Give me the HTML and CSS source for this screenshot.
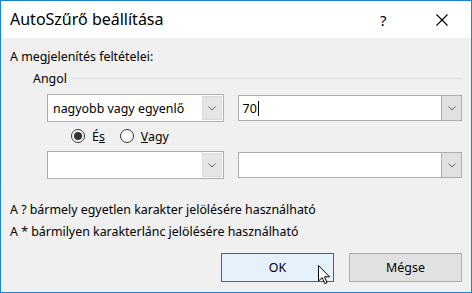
FILE: index.html
```html
<!DOCTYPE html>
<html lang="hu">

<head>
  <meta charset="UTF-8">
  <title>AutoSzűrő beállítása</title>
  <link rel="stylesheet" href="styles.css">
</head>

<body>
  <div class="dialog">
    <div class="dialog__title">
      <span class="dialog__caption">AutoSzűrő beállítása</span>
      <span class="dialog__help">?</span>
      <span class="dialog__close">
        <svg width="12" height="12" viewBox="0 0 12 12">
          <path d="M0.5 0.5 L11.5 11.5 M11.5 0.5 L0.5 11.5" stroke="#000" stroke-width="1.1" fill="none" />
        </svg>
      </span>
    </div>

    <div class="dialog__body">
      <p class="heading">A megjelenítés feltételei:</p>

      <div class="group">
        <span class="group__label">Angol</span>
        <span class="group__line"></span>
      </div>

      <div class="combo-row">
        <div class="combo combo--list">
          <span class="combo__text">nagyobb vagy egyenlő</span>
          <span class="combo__btn">
            <svg width="8" height="5" viewBox="0 0 8 5"><path d="M0.5 0.5 L4 4 L7.5 0.5" stroke="#606060" fill="none" /></svg>
          </span>
        </div>
        <div class="combo combo--edit">
          <span class="combo__text">70<span class="caret"></span></span>
          <span class="combo__btn">
            <svg width="8" height="5" viewBox="0 0 8 5"><path d="M0.5 0.5 L4 4 L7.5 0.5" stroke="#606060" fill="none" /></svg>
          </span>
        </div>
      </div>

      <div class="radios">
        <label class="radio">
          <span class="radio__dot radio__dot--on"></span>
          <span>É<u>s</u></span>
        </label>
        <label class="radio">
          <span class="radio__dot"></span>
          <span><u>V</u>agy</span>
        </label>
      </div>

      <div class="combo-row">
        <div class="combo combo--list">
          <span class="combo__text"></span>
          <span class="combo__btn">
            <svg width="8" height="5" viewBox="0 0 8 5"><path d="M0.5 0.5 L4 4 L7.5 0.5" stroke="#606060" fill="none" /></svg>
          </span>
        </div>
        <div class="combo combo--edit">
          <span class="combo__text"></span>
          <span class="combo__btn">
            <svg width="8" height="5" viewBox="0 0 8 5"><path d="M0.5 0.5 L4 4 L7.5 0.5" stroke="#606060" fill="none" /></svg>
          </span>
        </div>
      </div>

      <div class="hints">
        <p>A ? bármely egyetlen karakter jelölésére használható</p>
        <p>A * bármilyen karakterlánc jelölésére használható</p>
      </div>

      <div class="buttons">
        <button class="btn btn--default">OK</button>
        <button class="btn">Mégse</button>
      </div>
    </div>

    <svg class="pointer" width="13" height="20" viewBox="0 0 13 20">
      <path d="M0.5 0.5 L0.5 16 L4.2 12.6 L6.8 18.6 L9 17.6 L6.5 11.8 L11.5 11.8 Z" fill="#fff" stroke="#000" stroke-width="1" stroke-linejoin="miter" />
    </svg>
  </div>
</body>

</html>
```

FILE: styles.css
```css
html,
body {
  margin: 0;
  padding: 0;
}

body {
  font-family: "Noto Sans", "Liberation Sans", sans-serif;
  font-size: 12.4px;
  color: #000;
}

.dialog {
  position: relative;
  width: 472px;
  height: 293px;
  box-sizing: border-box;
  border: 1px solid #1883d7;
  background-color: #f0f0f0;
}

.dialog__title {
  display: flex;
  align-items: center;
  height: 37px;
  background-color: #fff;
}

.dialog__caption {
  flex-grow: 1;
  padding-left: 9px;
  font-size: 16px;
  padding-bottom: 1px;
}

.dialog__help {
  width: 12px;
  margin-right: 44px;
  font-size: 15px;
}

.dialog__close {
  display: flex;
  margin-right: 23px;
}

.dialog__body {
  padding: 11px 9px 0 9px;
}

.heading {
  margin: 0;
  line-height: 16px;
}

.group {
  display: flex;
  align-items: center;
  margin-top: 5px;
  padding-left: 23px;
  height: 16px;
}

.group__label {
  margin-right: 5px;
}

.group__line {
  flex-grow: 1;
  border-top: 1px solid #dcdcdc;
}

.combo-row {
  display: flex;
  align-items: center;
  margin-top: 8px;
  padding-left: 37px;
  height: 28px;
}

.combo {
  display: flex;
  box-sizing: border-box;
  background-color: #fff;
  border: 1px solid #adadad;
}

.combo--list {
  width: 177px;
  height: 28px;
}

.combo--edit {
  width: 225px;
  height: 26px;
  margin-left: 14px;
}

.combo__text {
  flex-grow: 1;
  display: flex;
  align-items: center;
  padding-left: 5px;
}

.combo--edit .combo__text {
  padding-left: 4px;
}

.caret {
  display: inline-block;
  width: 1px;
  height: 15px;
  background-color: #000;
  margin-left: 1px;
}

.combo__btn {
  display: flex;
  align-items: center;
  justify-content: center;
  width: 18px;
  background-color: #e5e5e5;
  border: 1px solid #dadada;
  margin: 1px;
}

.combo--edit .combo__btn {
  width: 19px;
  margin: 0;
  border-width: 0 0 0 1px;
  border-color: #adadad;
  background-color: #e1e1e1;
}

.radios {
  display: flex;
  align-items: center;
  margin-top: 7px;
  padding-left: 61px;
  height: 14px;
}

.radio {
  display: flex;
  align-items: center;
  margin-right: 15px;
}

.radio__dot {
  position: relative;
  width: 14px;
  height: 14px;
  box-sizing: border-box;
  border: 1px solid #333;
  border-radius: 50%;
  background-color: #fff;
  margin-right: 7px;
}

.radio__dot--on::after {
  content: "";
  position: absolute;
  left: 2px;
  top: 2px;
  width: 8px;
  height: 8px;
  border-radius: 50%;
  background-color: #333;
}

.hints {
  margin-top: 20px;
}

.hints p {
  margin: 0;
  line-height: 22px;
}

.buttons {
  display: flex;
  justify-content: flex-end;
  margin-top: 10px;
  gap: 15px;
}

.btn {
  width: 113px;
  height: 29px;
  box-sizing: border-box;
  border: 1px solid #adadad;
  background-color: #e1e1e1;
  font-family: inherit;
  font-size: 12.4px;
  color: #000;
  padding: 0;
}

.btn--default {
  border-color: #0078d7;
  background-color: #e5f1fb;
}

.pointer {
  position: absolute;
  left: 317px;
  top: 264px;
}
```
